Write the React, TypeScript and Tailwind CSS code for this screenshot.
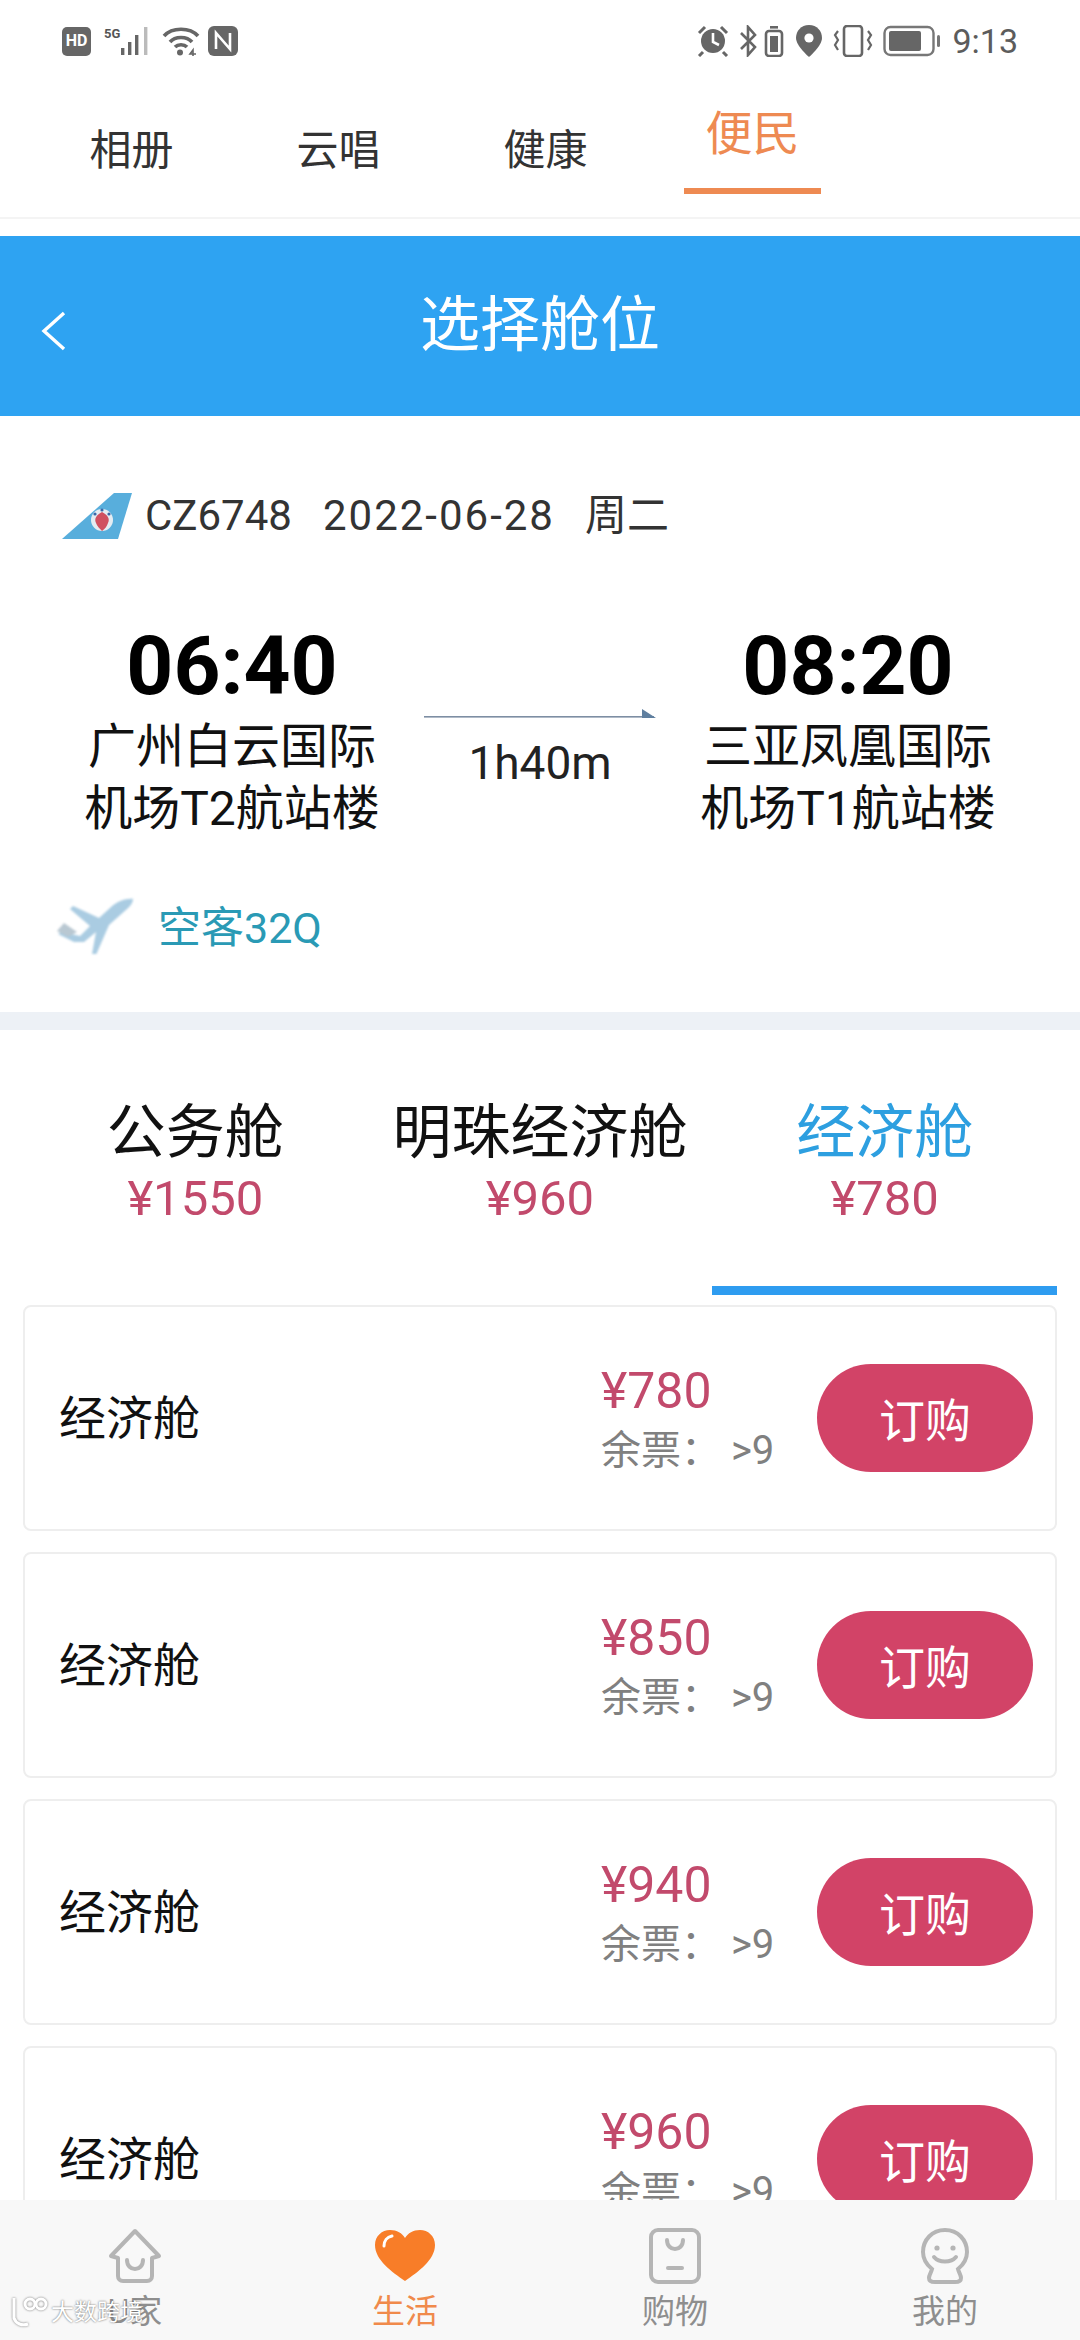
const tabs = ["相册", "云唱", "健康", "便民"];
const cabins = [
  { name: "公务舱", price: "¥1550" },
  { name: "明珠经济舱", price: "¥960" },
  { name: "经济舱", price: "¥780", active: true },
];
const fares = ["¥780", "¥850", "¥940", "¥960"];

const StatusLeft = () => (
  <div className="flex items-center">
    {/* HD badge */}
    <div className="flex h-[29px] w-[29px] items-center justify-center rounded-[5px] bg-[#666] text-[16px] font-bold leading-none text-white">
      HD
    </div>
    <svg width="50" height="30" viewBox="0 0 50 30" className="ml-[13px]">
      <text x="0" y="12" fontSize="13" fontWeight="700" fill="#555" fontFamily="Roboto">5G</text>
      <rect x="17" y="22" width="3.4" height="7" fill="#666" />
      <rect x="24" y="16" width="3.4" height="13" fill="#666" />
      <rect x="31" y="9" width="3.4" height="20" fill="#666" />
      <rect x="40" y="1" width="3.4" height="28" fill="#bbb" />
    </svg>
    <svg width="38" height="32" viewBox="0 0 38 32" className="ml-[8px]" fill="none" stroke="#666" strokeWidth="3.6">
      <path d="M2 11C10 2 28 2 36 11" />
      <path d="M8 17C13 11 25 11 30 17" />
      <path d="M13 22C16 19 22 19 25 22" />
      <circle cx="18" cy="27.5" r="3" fill="#666" stroke="none" />
      <path d="M31 31v-6l-3 4h6" strokeWidth="1.6" />
    </svg>
    <svg width="30" height="30" viewBox="0 0 30 30" className="ml-[8px]">
      <rect x="0" y="0" width="30" height="30" rx="6" fill="#666" />
      <path d="M8 23V7l14 16V7" fill="none" stroke="#fff" strokeWidth="2.6" />
    </svg>
  </div>
);

const StatusRight = () => (
  <div className="flex items-center">
    <svg width="34" height="32" viewBox="0 0 34 32">
      <circle cx="17" cy="16" r="12" fill="#666" />
      <path d="M17 8v9l6 3" fill="none" stroke="#fff" strokeWidth="2.6" />
      <path d="M3 8l6-6M31 8l-6-6M7 27l-4 4M27 27l4 4" stroke="#666" strokeWidth="3" />
    </svg>
    <svg width="44" height="32" viewBox="0 0 44 32" className="ml-[10px]" fill="none" stroke="#666" strokeWidth="2.6">
      <path d="M1 8l14 14-7 8V2l7 8L1 24" />
      <rect x="26" y="6" width="16" height="25" rx="3" />
      <rect x="30" y="11" width="8" height="16" fill="#666" stroke="none" />
      <rect x="30" y="1" width="8" height="2.6" fill="#666" stroke="none" />
    </svg>
    <svg width="28" height="32" viewBox="0 0 28 32" className="ml-[11px]">
      <path d="M14 0C6 0 1 6 1 13c0 8 13 19 13 19s13-11 13-19C27 6 22 0 14 0z" fill="#666" />
      <circle cx="14" cy="13" r="4.6" fill="#fff" />
    </svg>
    <svg width="40" height="32" viewBox="0 0 40 32" className="ml-[10px]" fill="none" stroke="#666" strokeWidth="2.6">
      <rect x="11" y="1" width="18" height="30" rx="3" />
      <path d="M5 6l-3 4 3 5-3 5 3 5M35 6l3 4-3 5 3 5-3 5" strokeWidth="2.2" />
    </svg>
    <svg width="58" height="32" viewBox="0 0 58 32" className="ml-[10px]" fill="none">
      <rect x="1.5" y="2" width="49" height="28" rx="6" stroke="#777" strokeWidth="2.4" />
      <rect x="6" y="6" width="32" height="20" rx="2" fill="#666" />
      <rect x="54" y="10" width="3" height="12" rx="1.5" fill="#777" />
    </svg>
    <span className="ml-[11px] text-[34px] leading-none text-[#5c5c5c]">9:13</span>
  </div>
);

const AirlineTail = () => (
  <svg width="70" height="48" viewBox="0 0 70 48">
    <path d="M0 47L52 1h18L56 47z" fill="#58aedc" />
    <circle cx="40" cy="28" r="11" fill="#e4ecf2" />
    <path d="M40 20c-6 3-8 7-6 11 1 3 4 6 6 8 3-2 5-5 6-8 2-4 0-8-6-11z" fill="#d05060" />
    <circle cx="33" cy="22" r="1.6" fill="#3a68a8" />
    <circle cx="40" cy="18" r="1.6" fill="#3a68a8" />
    <circle cx="47" cy="22" r="1.6" fill="#3a68a8" />
  </svg>
);

const PlaneIcon = () => (
  <svg width="80" height="56" viewBox="0 0 80 56" className="blur-[1px]">
    <path d="M79 1C72 0 62 3 55 10L44 20 18 8l-3 3 20 17-10 10-18-4-4 2 16 8 10 0 12-10 -4 22 4 1 13-30 18-16c4-3 6-7 6-10z" fill="#aaccE2" />
    <path d="M2 33l7-8 13 9-9 5z" fill="#b9c8d2" />
  </svg>
);

const RouteArrow = () => (
  <svg width="232" height="12" viewBox="0 0 232 12" className="block">
    <rect x="0" y="8" width="230" height="1.6" fill="#7d8ea3" />
    <path d="M218 1l14 9h-14z" fill="#5f7f9f" />
  </svg>
);

const HomeIcon = () => (
  <svg width="60" height="56" viewBox="0 0 60 56" fill="none" stroke="#b5b5b5" strokeWidth="4">
    <path d="M30 3L6 28l7 2v18c0 3 2 5 5 5h24c3 0 5-2 5-5V30l7-2z" strokeLinejoin="round" />
    <path d="M22 32c0 12 16 12 16 0" strokeLinecap="round" />
  </svg>
);

const HeartIcon = () => (
  <svg width="62" height="52" viewBox="0 0 62 52">
    <path d="M31 51C18 42 1 30 1 15 1 6 8 0 16 0c7 0 12 3 15 8 3-5 8-8 15-8 8 0 15 6 15 15 0 15-17 27-30 36z" fill="#f87d28" />
    <path d="M10 16c0-5 3-9 8-10" fill="none" stroke="#fff" strokeWidth="3" strokeLinecap="round" />
  </svg>
);

const BagIcon = () => (
  <svg width="52" height="56" viewBox="0 0 52 56" fill="none" stroke="#b5b5b5" strokeWidth="4">
    <rect x="2" y="2" width="48" height="52" rx="7" />
    <path d="M18 12c0 12 16 12 16 0" strokeLinecap="round" />
    <path d="M19 40h14" strokeLinecap="round" />
  </svg>
);

const FaceIcon = () => (
  <svg width="52" height="56" viewBox="0 0 52 56" fill="none" stroke="#b5b5b5" strokeWidth="4">
    <path d="M26 2C13 2 4 12 4 24c0 8 4 13 9 17-1 4-3 6-3 9 0 3 3 4 6 4h20c3 0 6-1 6-4 0-3-2-5-3-9 5-4 9-9 9-17C48 12 39 2 26 2z" />
    <circle cx="18" cy="20" r="2.6" fill="#b5b5b5" stroke="none" />
    <circle cx="34" cy="20" r="2.6" fill="#b5b5b5" stroke="none" />
    <path d="M15 29c5 6 17 6 22 0" strokeLinecap="round" />
  </svg>
);

const navItems = [
  { label: "U家", icon: <HomeIcon /> },
  { label: "生活", icon: <HeartIcon />, active: true },
  { label: "购物", icon: <BagIcon /> },
  { label: "我的", icon: <FaceIcon /> },
];

const FareCard = ({ price }: { price: string }) => (
  <div className="flex h-[226px] items-center justify-between rounded-[8px] border-2 border-[#eeeeee] bg-white pl-[34px] pr-[22px]">
    <span className="text-[47px] leading-none text-[#111]">经济舱</span>
    <div className="flex items-center">
      <div className="w-[216px] pt-[3px]">
        <div className="text-[50px] leading-[56px] text-[#c24a6c]">{price}</div>
        <div className="mt-[7px] text-[40px] leading-[50px] text-[#808080]">余票： &gt;9</div>
      </div>
      <button className="h-[108px] w-[216px] rounded-full bg-[#d24367] pt-[6px] text-[46px] text-white">订购</button>
    </div>
  </div>
);

export default function App() {
  return (
    <div className="relative h-[2340px] w-[1080px] overflow-hidden bg-white font-['Roboto','Noto_Sans_CJK_SC',sans-serif]">
      {/* status bar */}
      <div className="flex h-[82px] items-center justify-between pl-[62px] pr-[62px]">
        <StatusLeft />
        <StatusRight />
      </div>

      {/* top tabs */}
      <div className="grid h-[137px] grid-cols-[repeat(4,207px)] border-b-2 border-[#f4f4f4] pl-[28px]">
        {tabs.map((t) =>
          t === "便民" ? (
            <div key={t} className="flex flex-col items-center">
              <span className="mt-[28px] text-[47px] leading-[48px] text-[#ee8a52]">{t}</span>
              <div className="mt-[30px] h-[6px] w-[137px] bg-[#ee8a52]" />
            </div>
          ) : (
            <div key={t} className="flex flex-col items-center">
              <span className="mt-[45px] text-[42px] leading-[48px] text-[#333]">{t}</span>
            </div>
          )
        )}
      </div>

      {/* blue header */}
      <div className="mt-[17px] flex h-[180px] items-center justify-center bg-[#2ea3f2] relative">
        <svg width="26" height="40" viewBox="0 0 26 40" className="absolute left-[40px] top-[75px]" fill="none" stroke="#fff" strokeWidth="3.4">
          <path d="M24 2L4 20l20 18" />
        </svg>
        <span className="text-[60px] leading-none text-white">选择舱位</span>
      </div>

      {/* flight info */}
      <div className="pt-[76px] pb-[58px]">
        <div className="flex h-[48px] items-center pl-[62px] text-[42px] leading-none text-[#333]">
          <AirlineTail />
          <span className="ml-[13px]">CZ6748</span>
          <span className="ml-[31px] tracking-[2px]">2022-06-28</span>
          <span className="ml-[30px]">周二</span>
        </div>

        <div className="mt-[81px] grid grid-cols-[repeat(3,308px)] pl-[78px]">
          <div className="flex flex-col items-center">
            <div className="text-[82px] font-bold leading-[90px] text-black">06:40</div>
            <div className="mt-[5px] text-center text-[48px] leading-[62px] text-[#111]">
              <div>广州白云国际</div>
              <div>机场T2航站楼</div>
            </div>
          </div>
          <div className="flex flex-col items-center pt-[87px]">
            <RouteArrow />
            <div className="mt-[15px] text-[46px] leading-[56px] text-[#222]">1h40m</div>
          </div>
          <div className="flex flex-col items-center">
            <div className="text-[82px] font-bold leading-[90px] text-black">08:20</div>
            <div className="mt-[5px] text-center text-[48px] leading-[62px] text-[#111]">
              <div>三亚凤凰国际</div>
              <div>机场T1航站楼</div>
            </div>
          </div>
        </div>

        <div className="mt-[58px] flex h-[56px] items-center pl-[55px]">
          <PlaneIcon />
          <span className="ml-[23px] pt-[4px] text-[43px] leading-none text-[#2a9ab5]">空客32Q</span>
        </div>
      </div>

      <div className="h-[18px] bg-[#edf1f6]" />

      {/* cabin tabs */}
      <div className="grid grid-cols-3 px-[23px] pt-[68px]">
        {cabins.map((c) => (
          <div key={c.name} className="flex flex-col items-center">
            <div className={c.active ? "text-[59px] leading-[70px] text-[#2d9fe0]" : "text-[59px] leading-[70px] text-[#111]"}>
              {c.name}
            </div>
            <div className="mt-[3px] text-[49px] leading-[56px] text-[#c24a6c]">{c.price}</div>
            <div className={c.active ? "mt-[59px] h-[9px] w-full bg-[#2e9cf0]" : "mt-[59px] h-[9px] w-full"} />
          </div>
        ))}
      </div>

      {/* fare list */}
      <div className="mt-[10px] flex flex-col gap-[21px] px-[23px]">
        {fares.map((f) => (
          <FareCard key={f} price={f} />
        ))}
      </div>

      {/* bottom nav */}
      <div className="absolute bottom-0 left-0 grid h-[140px] w-full grid-cols-4 bg-[#f8f8f8]">
        {navItems.map((n) => (
          <div key={n.label} className="flex flex-col items-center">
            <div className="mt-[28px] flex h-[56px] items-center">{n.icon}</div>
            <span className={n.active ? "mt-[7px] text-[33px] leading-[42px] text-[#f08a4b]" : "mt-[7px] text-[33px] leading-[42px] text-[#8e8e8e]"}>
              {n.label}
            </span>
          </div>
        ))}
      </div>

      {/* watermark */}
      <div className="absolute bottom-[10px] left-[10px] flex items-center">
        <svg width="38" height="36" viewBox="0 0 38 36" fill="none" stroke="#fff" strokeWidth="3" className="drop-shadow-[0_0_1px_#777]">
          <path d="M4 4v20c2 6 8 8 14 6" />
          <circle cx="20" cy="10" r="5" />
          <circle cx="31" cy="10" r="5" />
        </svg>
        <span className="ml-[3px] text-[23px] leading-none text-white [text-shadow:0_0_2px_#555]">大数跨境</span>
      </div>
    </div>
  );
}
